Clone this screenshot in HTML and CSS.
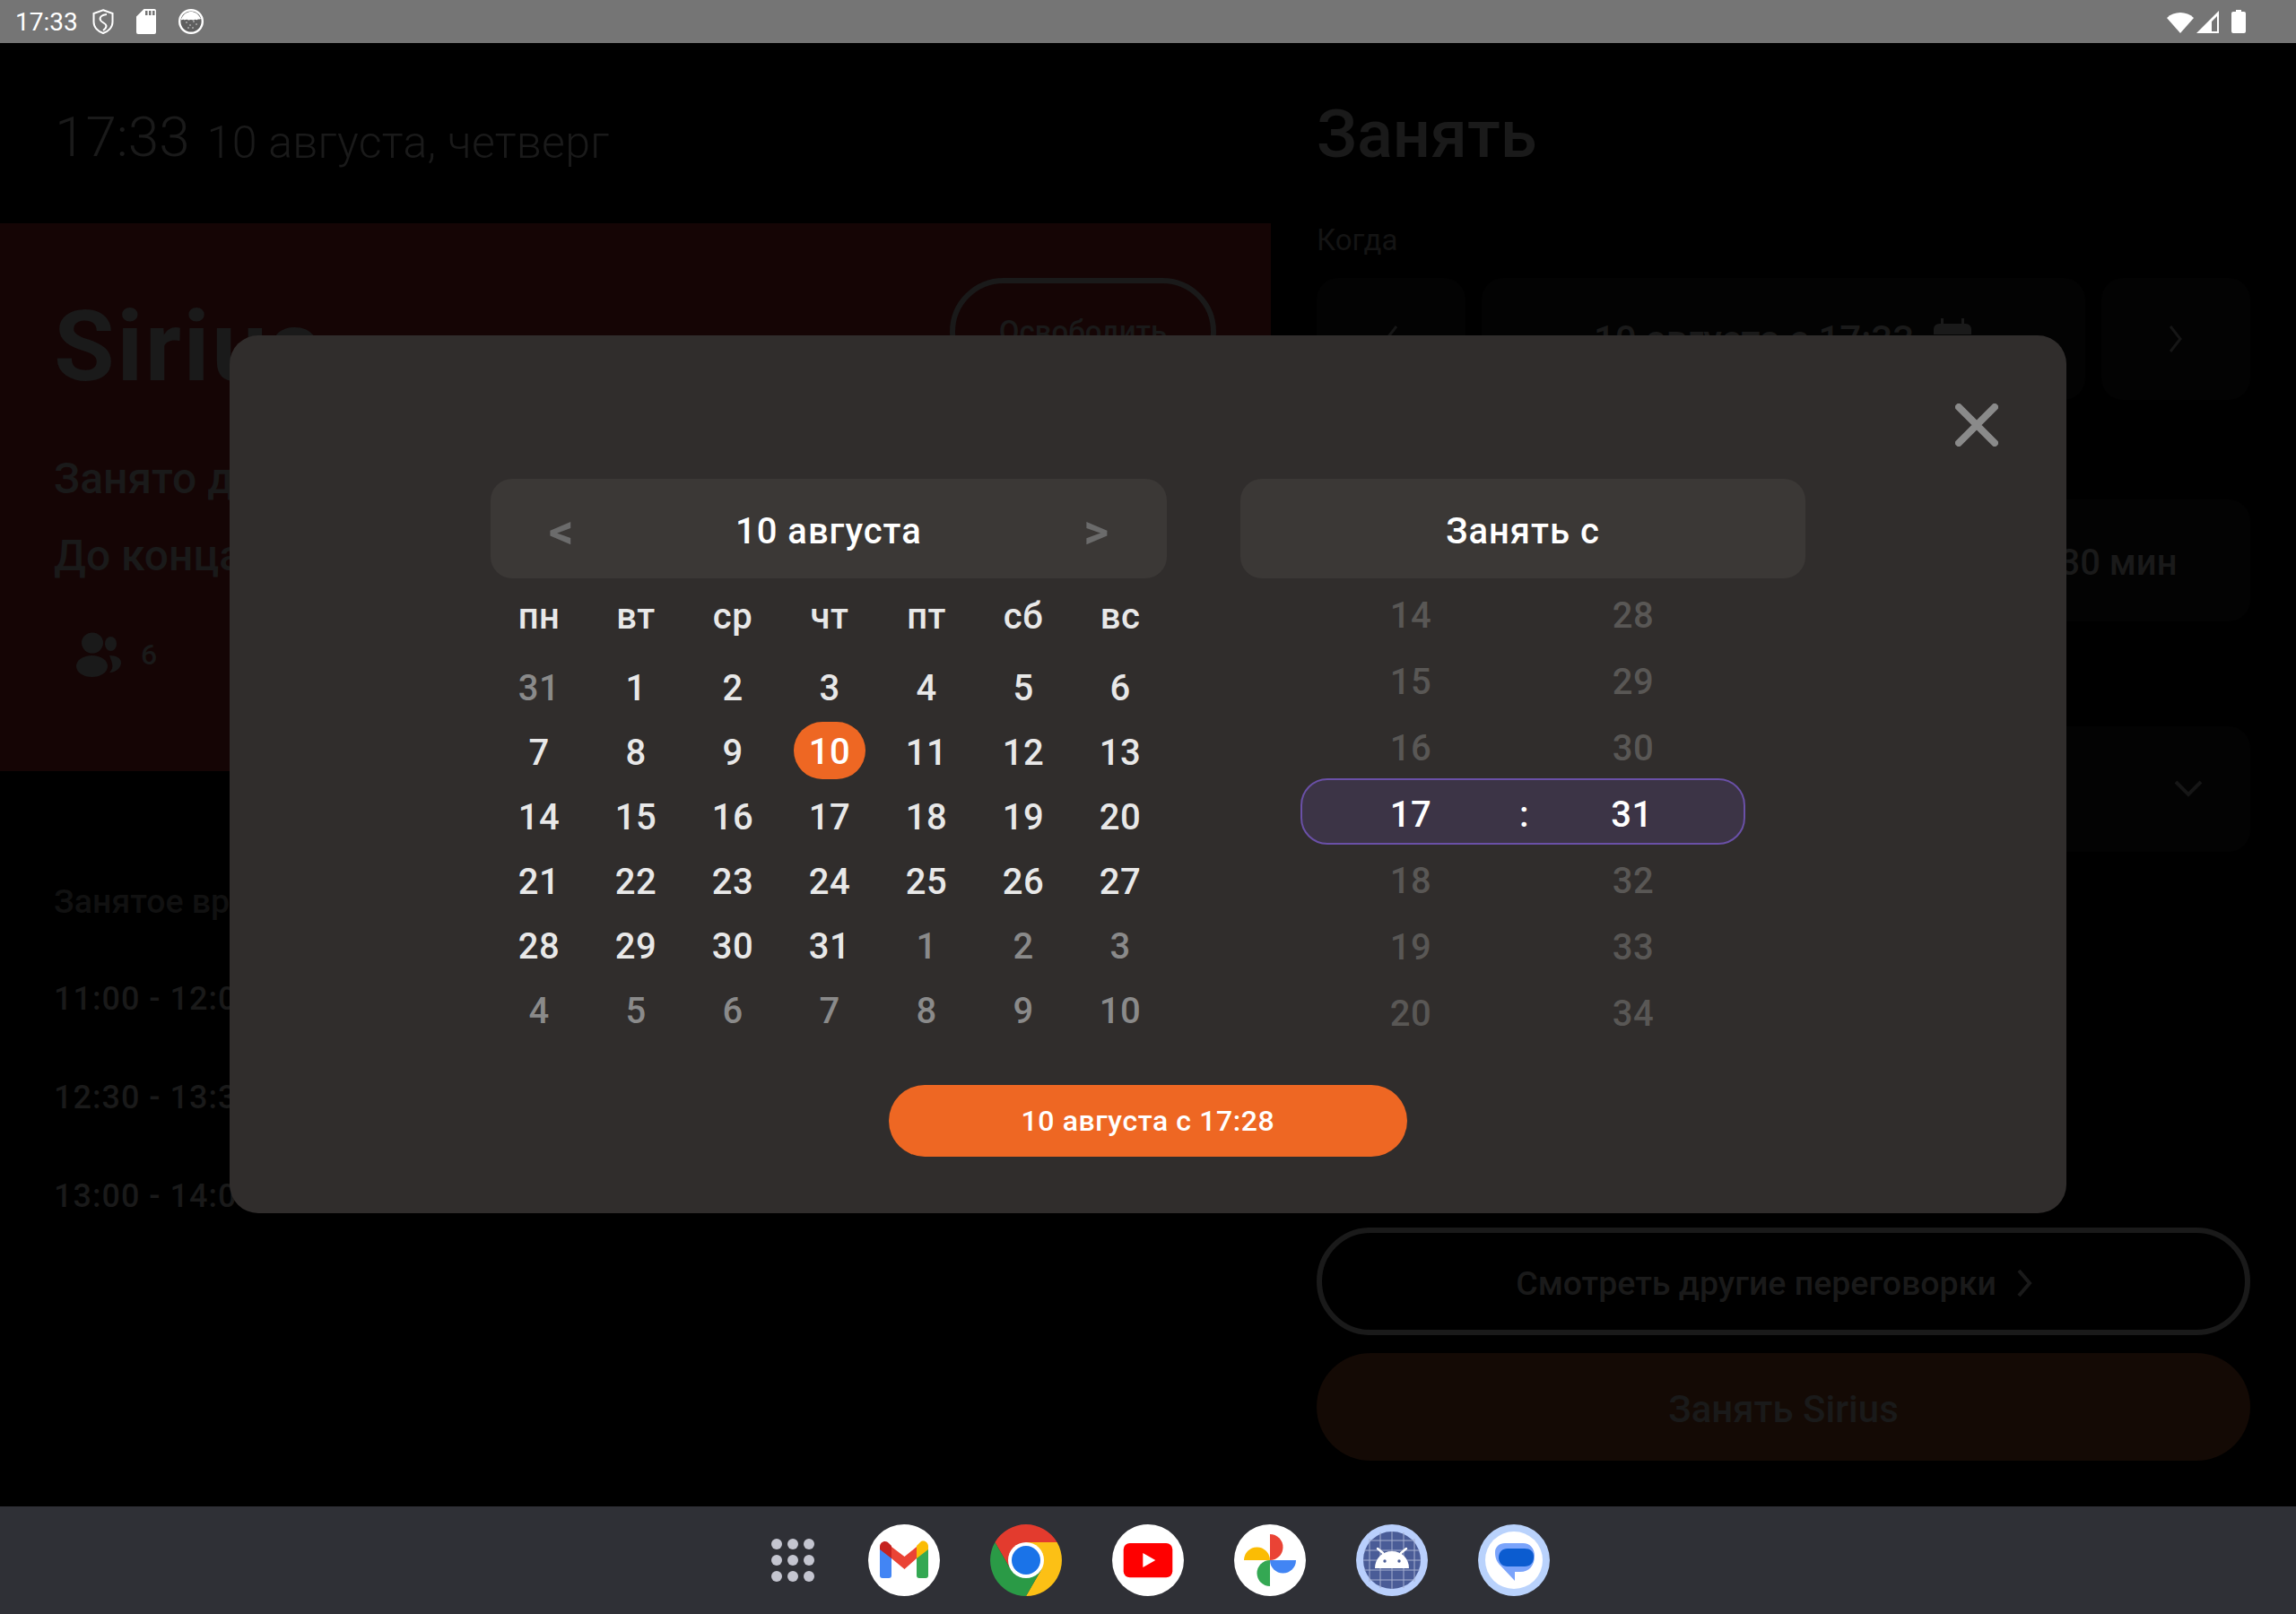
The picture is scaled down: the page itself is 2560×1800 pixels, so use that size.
FILE: index.html
```html
<!DOCTYPE html>
<html lang="ru">
<head>
<meta charset="utf-8">
<title>Занять</title>
<link rel="stylesheet" href="styles.css">
</head>
<body>
<div class="screen">
  <header class="statusbar">
    <div class="status-left">
      <span class="clock">17:33</span>
      <svg class="ic-shield" viewBox="0 0 24 28"><path d="M12 1.200 22.500 5v9.500c0 6-4.800 10.500-10.500 12.500C6.300 25 1.500 20.500 1.500 14.500V5Z" fill="none" stroke="#fff" stroke-width="2"/><path d="M16 6C10.500 6.500 7.500 9 9 12.500c1 2.500 6.500 3.500 6.500 6.500 0 1.800-1.500 3.500-3.500 5" fill="none" stroke="#fff" stroke-width="2"/></svg>
      <svg class="ic-sd" viewBox="0 0 22 28"><path fill-rule="evenodd" d="M8.500 0H20a2 2 0 0 1 2 2v24a2 2 0 0 1-2 2H2a2 2 0 0 1-2-2V8.500ZM10 2v5h2.500V2Zm4 0v5h2.500V2Zm4 0v5h2.500V2Z" fill="#fff"/></svg>
      <svg class="ic-circle" viewBox="0 0 28 28"><circle cx="14" cy="14" r="12.800" fill="#5f5f5f" stroke="#fff" stroke-width="2.400"/><path d="M3 11C6 5 10 3 14 3s8 2 11 8c-2 1-3 0-4 1s-2-1-3 0-3 0-4 0-3 1-4 0-3 1-4 0-2 1-3 0Z" fill="#fff"/><g fill="#ddd"><circle cx="9" cy="15" r=".8"/><circle cx="13" cy="18" r=".8"/><circle cx="17" cy="14" r=".8"/><circle cx="20" cy="17" r=".8"/><circle cx="11" cy="21" r=".8"/><circle cx="16" cy="21" r=".8"/></g></svg>
    </div>
    <div class="status-right">
      <svg class="ic-wifi" viewBox="0 0 30 25"><path d="M15 25 0 8A22 22 0 0 1 30 8Z" fill="#fff"/></svg>
      <svg class="ic-signal" viewBox="0 0 25 25"><path fill-rule="evenodd" d="M0 25 25 0v25ZM17 23h6V6l-6 6Z" fill="#fff"/></svg>
      <svg class="ic-battery" viewBox="0 0 16 26"><path d="M5 0h6v2h3a2 2 0 0 1 2 2v20a2 2 0 0 1-2 2H2a2 2 0 0 1-2-2V4a2 2 0 0 1 2-2h3Z" fill="#fff"/></svg>
    </div>
  </header>

  <main class="app">
    <section class="left">
      <div class="datetime">
        <span class="dt-time">17:33</span>
        <span class="dt-date">10 августа, четверг</span>
      </div>
      <div class="room">
        <div class="room-head">
          <h1 class="room-name">Sirius</h1>
          <span class="release">Освободить</span>
        </div>
        <p class="room-line first">Занято до 18:00</p>
        <p class="room-line">До конца 27 мин</p>
        <div class="people">
          <svg class="ic-people" viewBox="0 0 50 51"><g fill="#1a1a1a"><ellipse cx="18" cy="13" rx="12" ry="11.500"/><ellipse cx="17.500" cy="39" rx="17.500" ry="12"/><ellipse cx="38.500" cy="14" rx="6.500" ry="8"/><path d="M37 27c8 0 13 3 13 8s-5 11-13 11c3-3 4-6 3-10s-2-6-3-9Z"/></g></svg>
          <span>6</span>
        </div>
      </div>
      <div class="busy">
        <h2 class="busy-title">Занятое время</h2>
        <p class="busy-row">11:00 - 12:00</p>
        <p class="busy-row">12:30 - 13:30</p>
        <p class="busy-row">13:00 - 14:00</p>
      </div>
    </section>

    <section class="right">
      <h1 class="book-title">Занять</h1>
      <p class="book-label">Когда</p>
      <div class="stepper">
        <div class="step-btn"><svg class="ic-chev" viewBox="0 0 20 32"><path d="M16 2 5 16l11 14" fill="none" stroke="#161616" stroke-width="3"/></svg></div>
        <div class="step-main">
          <span>10 августа с 17:33</span>
          <svg class="ic-cal" viewBox="0 0 46 46"><path d="M10 0h3v6h20V0h3v6h2a6 6 0 0 1 6 6v6H2v-6a6 6 0 0 1 6-6h2ZM2 22h42v18a6 6 0 0 1-6 6H8a6 6 0 0 1-6-6Z" fill="#1a1a1a"/></svg>
        </div>
        <div class="step-btn"><svg class="ic-chev" viewBox="0 0 20 32"><path d="M4 2l11 14L4 30" fill="none" stroke="#161616" stroke-width="3"/></svg></div>
      </div>
      <div class="duration"><div class="chip">30 мин</div></div>
      <div class="select"><svg class="ic-down" viewBox="0 0 32 20"><path d="M2 2l14 14L30 2" fill="none" stroke="#161616" stroke-width="4"/></svg></div>
      <div class="actions">
        <div class="btn-outline">Смотреть другие переговорки<svg class="ic-chev-btn" viewBox="0 0 20 32"><path d="M3 2l12 14L3 30" fill="none" stroke="#1a1a1a" stroke-width="4"/></svg></div>
        <div class="btn-fill">Занять Sirius</div>
      </div>
    </section>

    <div class="overlay">
      <div class="modal">
        <svg class="close" viewBox="0 0 48 48"><path d="M4 4l40 40M44 4 4 44" stroke="#8a8a8a" stroke-width="8" stroke-linecap="round"/></svg>
        <div class="pickers">
          <div class="calendar">
            <div class="panel-head">
              <span class="arrow">&lt;</span>
              <span class="panel-title">10 августа</span>
              <span class="arrow">&gt;</span>
            </div>
            <div class="grid weekdays">
              <span>пн</span><span>вт</span><span>ср</span><span>чт</span><span>пт</span><span>сб</span><span>вс</span>
            </div>
            <div class="grid days">
              <span class="out">31</span><span>1</span><span>2</span><span>3</span><span>4</span><span>5</span><span>6</span>
              <span>7</span><span>8</span><span>9</span><span class="today"><b>10</b></span><span>11</span><span>12</span><span>13</span>
              <span>14</span><span>15</span><span>16</span><span>17</span><span>18</span><span>19</span><span>20</span>
              <span>21</span><span>22</span><span>23</span><span>24</span><span>25</span><span>26</span><span>27</span>
              <span>28</span><span>29</span><span>30</span><span>31</span><span class="out">1</span><span class="out">2</span><span class="out">3</span>
              <span class="out">4</span><span class="out">5</span><span class="out">6</span><span class="out">7</span><span class="out">8</span><span class="out">9</span><span class="out">10</span>
            </div>
          </div>
          <div class="timepick">
            <div class="panel-head center"><span class="panel-title">Занять с</span></div>
            <div class="wheel">
              <div class="wheel-row"><span>14</span><i></i><span>28</span></div>
              <div class="wheel-row"><span>15</span><i></i><span>29</span></div>
              <div class="wheel-row"><span>16</span><i></i><span>30</span></div>
              <div class="wheel-row selected"><span>17</span><i>:</i><span>31</span></div>
              <div class="wheel-row"><span>18</span><i></i><span>32</span></div>
              <div class="wheel-row"><span>19</span><i></i><span>33</span></div>
              <div class="wheel-row"><span>20</span><i></i><span>34</span></div>
            </div>
          </div>
        </div>
        <div class="confirm">10 августа с 17:28</div>
      </div>
    </div>
  </main>

  <nav class="dock">
    <div class="apps-grid"><i></i><i></i><i></i><i></i><i></i><i></i><i></i><i></i><i></i></div>
    <svg class="app-ic" viewBox="0 0 80 80"><circle cx="40" cy="40" r="40" fill="#fff"/>
      <path d="M13 27v30a3 3 0 0 0 3 3h7a3 3 0 0 0 3-3V37Z" fill="#4285f4"/>
      <path d="M54 37v20a3 3 0 0 0 3 3h7a3 3 0 0 0 3-3V27Z" fill="#34a853"/>
      <path d="M26 25l14.500 11L54 25v13L40.500 50 26 38Z" fill="#ea4335"/>
      <path d="M13 25c0-6 7-8 10-4l3 3v14L13 28Z" fill="#c5221f"/>
      <path d="M54 24l4-4c3-3 9-1 9 5v3L54 38Z" fill="#fbbc04"/></svg>
    <svg class="app-ic" viewBox="0 0 80 80">
      <path d="M5.400 20A40 40 0 0 1 74.600 20H40L22.700 50Z" fill="#e33b2e"/>
      <path d="M74.600 20A40 40 0 0 1 40 80L57.300 50 40 20Z" fill="#fcc015"/>
      <path d="M40 80A40 40 0 0 1 5.400 20L22.700 50H57.300Z" fill="#2a9a46"/>
      <circle cx="40" cy="40" r="20" fill="#fff"/><circle cx="40" cy="40" r="16" fill="#1a73e8"/></svg>
    <svg class="app-ic" viewBox="0 0 80 80"><circle cx="40" cy="40" r="40" fill="#fff"/>
      <rect x="12.700" y="21" width="54.600" height="38.300" rx="7" fill="#f00"/>
      <path d="M34.300 32l14 8-14 8Z" fill="#fff"/></svg>
    <svg class="app-ic" viewBox="0 0 80 80"><circle cx="40" cy="40" r="40" fill="#fff"/>
      <path d="M40 11A14.500 14.500 0 0 1 40 40Z" fill="#ea4335"/>
      <path d="M40 40H69A14.500 14.500 0 0 1 40 40Z" fill="#4285f4"/>
      <path d="M40 40V69A14.500 14.500 0 0 1 40 40Z" fill="#34a853"/>
      <path d="M11 40A14.500 14.500 0 0 1 40 40Z" fill="#fbbc04"/></svg>
    <svg class="app-ic" viewBox="0 0 80 80"><circle cx="40" cy="40" r="40" fill="#b9cffc"/><circle cx="40" cy="40" r="32" fill="#4a5c97"/>
      <path d="M15 16V64M27 9V71M40 8V72M53 9V71M65 16V64M16 18H64M9 29H71M8 40H72M9 51H71M16 62H64" stroke="#a5afd0" stroke-width="1" fill="none"/>
      <path d="M24 27l6 5M56 27l-6 5" stroke="#fff" stroke-width="2.400" stroke-linecap="round"/>
      <path d="M21 49c0-11 8-19 19-19s19 8 19 19Z" fill="#fff"/>
      <circle cx="32" cy="41" r="1.700" fill="#4a5c97"/><circle cx="48" cy="41" r="1.700" fill="#4a5c97"/></svg>
    <svg class="app-ic" viewBox="0 0 80 80"><circle cx="40" cy="40" r="40" fill="#b9d2fc"/><circle cx="40" cy="40" r="32" fill="#fff"/>
      <path d="M30 21H50C58 21 63 27 63 35 63 46 57 53 47 53H41V63L25 46C20 41 19 36 19 31 19 25 24 21 30 21Z" fill="#7ba4fb"/>
      <path d="M33 27H52C58 27 62 30 62 36V37C62 43 58 47 52 47H33C27 47 23 43 23 37 23 31 27 27 33 27Z" fill="#0b5cd0"/></svg>
  </nav>
</div>
</body>
</html>
```
FILE: styles.css
```css
* { box-sizing: border-box; }
html, body { margin: 0; padding: 0; background: #000; }
body { font-family: Roboto, "Noto Sans", sans-serif; }
h1, h2, p { margin: 0; font-weight: inherit; font-size: inherit; }
i { font-style: normal; }
.screen { width: 2560px; height: 1800px; display: flex; flex-direction: column; overflow: hidden; }

/* status bar */
.statusbar { height: 48px; flex: none; background: #757575; display: flex; justify-content: space-between; align-items: center; padding: 0 56px 0 17px; }
.status-left, .status-right { display: flex; align-items: center; }
.status-left { gap: 25px; }
.status-right { gap: 3px; }
.clock { color: #fff; font-size: 28px; margin-right: -9px; }
.ic-shield { width: 24px; height: 28px; }
.ic-sd { width: 22px; height: 28px; }
.ic-circle { width: 28px; height: 28px; }
.ic-wifi { width: 30px; height: 25px; }
.ic-signal { width: 25px; height: 25px; }
.ic-battery { width: 16px; height: 26px; margin-left: 11px; }

/* dimmed app */
.app { flex: 1; display: flex; position: relative; background: #000; color: #1a1a1a; min-height: 0; }
.left { width: 1417px; flex: none; }
.datetime { height: 201px; padding: 74px 0 0 61px; display: flex; align-items: baseline; gap: 19px; line-height: 1; }
.dt-time { font-size: 62px; font-weight: 300; }
.dt-date { font-size: 50px; font-weight: 300; letter-spacing: .3px; position: relative; top: 2px; }
.room { height: 611px; background: #150505; padding: 82px 61px 0 60px; }
.room-head { display: flex; justify-content: space-between; align-items: flex-start; height: 112px; }
.room-name { font-size: 110px; font-weight: 700; line-height: 112px; letter-spacing: 2.500px; }
.release { width: 297px; height: 120px; margin-top: -21px; border: 6px solid #1a1a1a; border-radius: 60px; display: flex; justify-content: center; align-items: flex-start; padding-top: 34px; font-size: 33px; line-height: 40px; font-weight: 500; }
.room-line { font-size: 48px; line-height: 86px; font-weight: 500; }
.room-line.first { margin-top: 48px; }
.people { display: flex; align-items: center; gap: 22px; margin-top: 41px; padding-left: 25px; font-size: 32px; font-weight: 500; }
.ic-people { width: 50px; height: 51px; }
.busy { padding: 115px 0 0 60px; font-size: 36px; font-weight: 500; }
.busy-title { line-height: 60px; margin-bottom: 24px; color: #111; font-size: 37.500px; }
.busy-row { line-height: 110px; letter-spacing: 1px; }

.right { flex: 1; display: flex; flex-direction: column; padding: 60px 51px 51px; }
.book-title { font-size: 74px; line-height: 84px; font-weight: 500; }
.book-label { margin-top: 56px; font-size: 33px; line-height: 40px; color: #141414; }
.stepper { display: flex; gap: 18px; margin-top: 22px; height: 136px; }
.step-btn { width: 166px; background: #030303; border-radius: 24px; display: flex; justify-content: center; align-items: center; }
.ic-chev { width: 20px; height: 32px; }
.step-main { flex: 1; background: #030303; border-radius: 24px; display: flex; justify-content: center; align-items: center; gap: 20px; font-size: 42px; font-weight: 500; }
.ic-cal { width: 46px; height: 46px; }
.duration { display: flex; justify-content: flex-end; margin-top: 111px; }
.chip { width: 294px; height: 136px; padding-top: 5px; background: #030303; border-radius: 24px; display: flex; justify-content: center; align-items: center; font-size: 40px; font-weight: 500; }
.select { height: 140px; margin-top: 117px; background: #030303; border-radius: 24px; display: flex; justify-content: flex-end; align-items: center; padding-right: 53px; }
.ic-down { width: 32px; height: 20px; }
.actions { margin-top: auto; display: flex; flex-direction: column; gap: 20px; }
.btn-outline, .btn-fill { height: 120px; border-radius: 60px; display: flex; justify-content: center; align-items: center; font-weight: 500; }
.btn-outline { border: 6px solid #1a1a1a; gap: 22px; font-size: 37.500px; padding: 3px 19px 0 0; }
.ic-chev-btn { width: 20px; height: 32px; }
.btn-fill { background: #140a05; font-size: 42px; padding-top: 5px; }

/* modal */
.overlay { position: absolute; inset: 0; padding-bottom: 1px; display: flex; justify-content: center; align-items: center; }
.modal { position: relative; width: 2048px; height: 979px; background: #302d2c; border-radius: 32px; padding-top: 160px; display: flex; flex-direction: column; align-items: center; color: #e8e8e8; }
.close { position: absolute; top: 76px; right: 76px; width: 48px; height: 48px; }
.pickers { display: flex; gap: 82px; }
.calendar { width: 754px; }
.timepick { width: 630px; }
.panel-head { height: 111px; padding: 6px 65px 0; background: #3b3836; border-radius: 24px; display: flex; justify-content: space-between; align-items: center; }
.panel-head.center { justify-content: center; }
.panel-title { color: #fff; font-size: 40px; font-weight: 500; letter-spacing: 1px; }
.arrow { color: #6b6b6b; font-size: 54px; font-weight: 700; line-height: 1; }
.grid { display: grid; grid-template-columns: repeat(7, 108px); margin-right: -2px; text-align: center; font-size: 40px; font-weight: 500; letter-spacing: .5px; }
.weekdays { height: 72px; margin-top: 7px; line-height: 72px; }
.days { margin-top: 8px; grid-auto-rows: 72px; line-height: 72px; }
.out { color: #8a8a8a; }
.today { display: flex; justify-content: center; align-items: center; }
.today b { width: 80px; height: 64px; margin-bottom: 6px; border-radius: 32px; background: #ee6723; color: #fff; font-weight: 500; line-height: 68px; }
.wheel { margin-top: 5px; padding: 0 67px; color: #595755; font-size: 40px; font-weight: 500; letter-spacing: .5px; }
.wheel-row { display: grid; grid-template-columns: 246px 6px 238px; height: 74px; line-height: 70px; text-align: center; align-items: center; }
.wheel-row.selected { color: #fff; background: #3c3446; border: 2px solid #6a50a7; border-radius: 30px; padding-top: 4px; margin-top: -4px; margin-bottom: 4px; grid-template-columns: 242px 3px 245px; }
.confirm { margin-top: 42px; width: 578px; height: 80px; flex: none; border-radius: 40px; background: #ee6723; color: #fff; display: flex; justify-content: center; align-items: center; font-size: 32px; font-weight: 500; letter-spacing: .6px; }

/* dock */
.dock { height: 120px; flex: none; background: #2f3036; display: flex; justify-content: center; align-items: center; gap: 56px; padding-left: 23px; }
.apps-grid { width: 56px; height: 48px; display: grid; grid-template-columns: repeat(3, 12px); grid-auto-rows: 12px; justify-content: center; gap: 6px; }
.apps-grid i { border-radius: 50%; background: #c4c5d0; }
.app-ic { width: 80px; height: 80px; }
```
